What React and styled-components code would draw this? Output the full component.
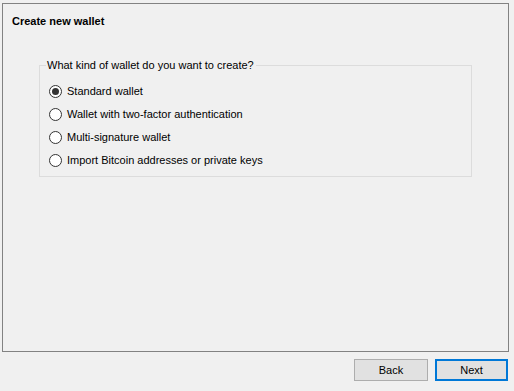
import React, { useState } from 'react';
import styled, { createGlobalStyle } from 'styled-components';

const GlobalStyle = createGlobalStyle`
  html, body {
    margin: 0;
    padding: 0;
    background: #f0f0f0;
  }
  body {
    font-family: "Liberation Sans", Arial, sans-serif;
    font-size: 11px;
    color: #000000;
  }
`;

const Window = styled.div`
  width: 514px;
  height: 391px;
  display: flex;
  flex-direction: column;
  box-sizing: border-box;
  padding: 3px 5px 0 2px;
`;

const Panel = styled.div`
  height: 349px;
  box-sizing: border-box;
  border: 1px solid #828282;
  display: flex;
  flex-direction: column;
`;

const Title = styled.h1`
  margin: 0;
  padding: 9px 0 0 9px;
  font-size: 11px;
  font-weight: bold;
  line-height: 16px;
`;

const GroupBox = styled.fieldset`
  margin: 28px 36px 0 36px;
  padding: 0;
  border: 1px solid #dcdcdc;
  height: 120px;
  box-sizing: border-box;
`;

const Legend = styled.legend`
  padding: 0 2px 0 1px;
  margin-left: 6px;
  line-height: 16px;
`;

const OptionList = styled.div`
  display: flex;
  flex-direction: column;
  gap: 7px;
  padding: 10px 0 0 9px;
`;

const Option = styled.label`
  display: flex;
  align-items: center;
  gap: 5px;
  height: 16px;
  cursor: default;
`;

const RadioCircle = styled.span`
  width: 13px;
  height: 13px;
  box-sizing: border-box;
  border: 1px solid #333333;
  border-radius: 50%;
  background: #ffffff;
  display: flex;
  align-items: center;
  justify-content: center;
  flex-shrink: 0;

  &::after {
    content: '';
    width: 7px;
    height: 7px;
    border-radius: 50%;
    background: ${(p) => (p.$checked ? '#333333' : 'transparent')};
  }
`;

const Footer = styled.div`
  display: flex;
  justify-content: flex-end;
  gap: 7px;
  padding: 7px 1px 0 0;
`;

const Button = styled.button`
  width: ${(p) => p.$width}px;
  height: 22px;
  box-sizing: border-box;
  background: #e1e1e1;
  border: ${(p) => (p.$primary ? '2px solid #0078d7' : '1px solid #adadad')};
  font-family: "Liberation Sans", Arial, sans-serif;
  font-size: 11px;
  color: #000000;
  padding: 0;
`;

const options = [
  'Standard wallet',
  'Wallet with two-factor authentication',
  'Multi-signature wallet',
  'Import Bitcoin addresses or private keys',
];

const App = () => {
  const [selected, setSelected] = useState(0);

  return (
    <>
      <GlobalStyle />
      <Window>
        <Panel>
          <Title>Create new wallet</Title>
          <GroupBox>
            <Legend>What kind of wallet do you want to create?</Legend>
            <OptionList>
              {options.map((label, i) => (
                <Option key={label} onClick={() => setSelected(i)}>
                  <RadioCircle $checked={selected === i} />
                  {label}
                </Option>
              ))}
            </OptionList>
          </GroupBox>
        </Panel>
        <Footer>
          <Button $width={74}>Back</Button>
          <Button $width={73} $primary>Next</Button>
        </Footer>
      </Window>
    </>
  );
};

export default App;
